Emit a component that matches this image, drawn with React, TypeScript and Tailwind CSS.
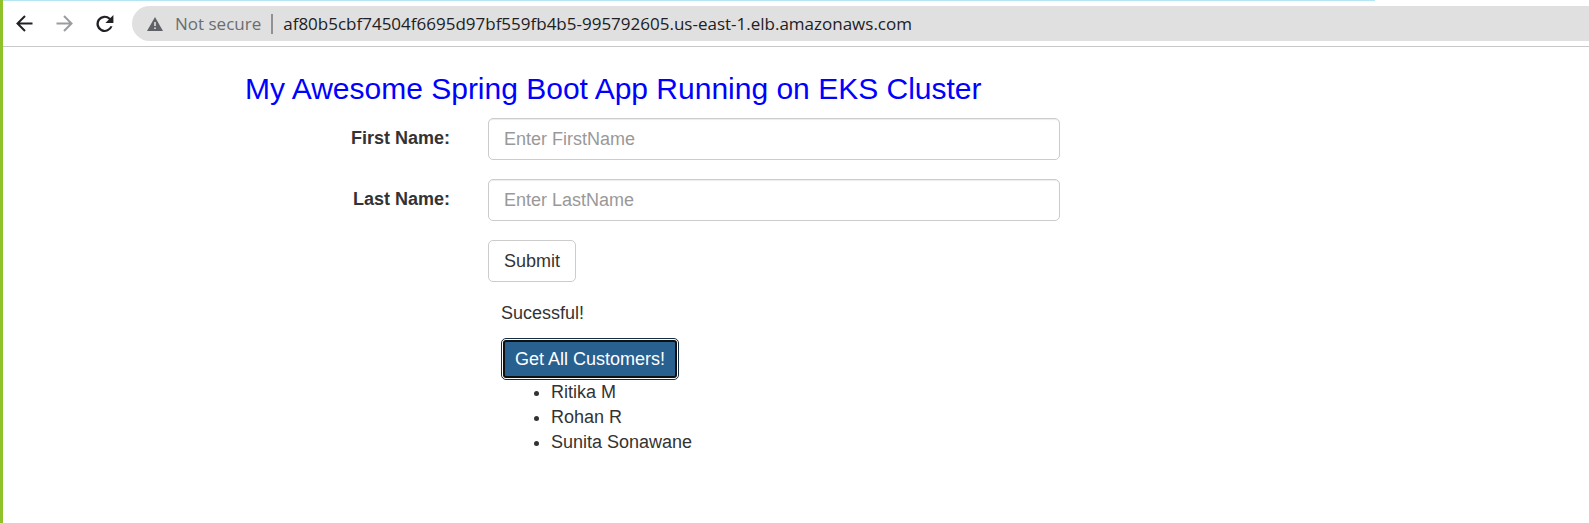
import { useState } from "react";
import type { ReactNode } from "react";

const ADDRESS = "af80b5cbf74504f6695d97bf559fb4b5-995792605.us-east-1.elb.amazonaws.com";

const customers = ["Ritika M", "Rohan R", "Sunita Sonawane"];

function NavButton({ label, className, children }: { label: string; className: string; children: ReactNode }) {
  return (
    <button type="button" aria-label={label} className={`flex size-6 shrink-0 items-center justify-center ${className}`}>
      {children}
    </button>
  );
}

function BrowserBar() {
  return (
    <header className="border-b border-[#c8c8c8]">
      <div className="mr-[214px] h-px bg-[#b3e5f2]" />
      <div className="flex items-center py-[5px] pl-[9px]">
        <NavButton label="Back" className="text-[#202124]">
          <svg viewBox="0 0 24 24" className="size-6" fill="none" stroke="currentColor" strokeWidth="2">
            <path d="M20.5 11.500H5.500M13 4 5.500 11.500 13 19" />
          </svg>
        </NavButton>
        <NavButton label="Forward" className="ml-4 text-[#9a9c9e]">
          <svg viewBox="0 0 24 24" className="size-6" fill="none" stroke="currentColor" strokeWidth="2">
            <path d="M4.500 11.500H19.500M12 4l7.500 7.500L12 19" />
          </svg>
        </NavButton>
        <NavButton label="Reload" className="ml-4 text-[#202124]">
          <svg viewBox="0 0 24 24" className="size-6" fill="currentColor">
            <path d="M18.400 6A8.200 8.200 0 1 0 20.500 14.200h-2.200a6 6 0 1 1-1.400-6.700L13.400 11H21.400V3z" />
          </svg>
        </NavButton>
        <div className="ml-4 flex h-[35px] min-w-0 flex-1 items-center rounded-l-full bg-[#e0e0e0] pl-[15px] font-['Open_Sans','Segoe_UI',sans-serif] text-[17px]">
          <svg viewBox="0 0 16 14" className="h-[14px] w-4 shrink-0" aria-hidden="true">
            <path d="M8 0 16 14H0z" fill="#5f6368" />
            <path d="M7.200 5h1.600v4H7.200zM7.200 10.500h1.600v1.600H7.200z" fill="#e0e0e0" />
          </svg>
          <span className="ml-3 shrink-0 text-[#6b6d70]">Not secure</span>
          <span className="mx-[10px] h-5 w-[2px] shrink-0 bg-[#919191]" />
          <input
            type="text"
            aria-label="Address"
            defaultValue={ADDRESS}
            className="min-w-0 flex-1 bg-transparent text-[#202124] outline-none"
          />
        </div>
      </div>
    </header>
  );
}

function Field({ id, label, placeholder }: { id: string; label: string; placeholder: string }) {
  return (
    <div className="flex items-start">
      <label htmlFor={id} className="w-[205px] shrink-0 pt-2 text-right font-bold">
        {label}
      </label>
      <input
        id={id}
        type="text"
        placeholder={placeholder}
        className="ml-[38px] h-[42px] min-w-0 flex-1 rounded-[5px] border border-[#ccc] px-[15px] shadow-[inset_0_1px_1px_rgba(0,0,0,0.075)] placeholder:text-[#999]"
      />
    </div>
  );
}

export default function App() {
  const [names] = useState(customers);

  return (
    <div className="min-h-screen border-l-[3px] border-[#8fc22a] bg-white font-['Liberation_Sans',Arial,sans-serif] text-[18px] leading-[25px] text-[#333]">
      <BrowserBar />
      <main className="ml-[242px] max-w-[815px] pt-[25px]">
        <h1 className="text-[30px] leading-[33px] text-[#0000ff]">My Awesome Spring Boot App Running on EKS Cluster</h1>
        <form className="mt-[13px] flex flex-col gap-[19px]" onSubmit={(event) => event.preventDefault()}>
          <Field id="firstname" label="First Name:" placeholder="Enter FirstName" />
          <Field id="lastname" label="Last Name:" placeholder="Enter LastName" />
          <div className="pl-[243px]">
            <button type="submit" className="block h-[42px] rounded-[5px] border border-[#ccc] bg-white px-[15px]">
              Submit
            </button>
          </div>
        </form>
        <section className="mt-[19px] pl-[256px]">
          <p>Sucessful!</p>
          <button
            type="button"
            className="mt-3 block h-[42px] rounded-[5px] border border-[#122b40] bg-white p-px text-white"
          >
            <span className="flex h-full items-center rounded-[3px] border-2 border-[#101010] bg-[#286090] px-[10px]">
              Get All Customers!
            </span>
          </button>
          <ul className="list-disc pl-[50px]">
            {names.map((name) => (
              <li key={name}>{name}</li>
            ))}
          </ul>
        </section>
      </main>
    </div>
  );
}
